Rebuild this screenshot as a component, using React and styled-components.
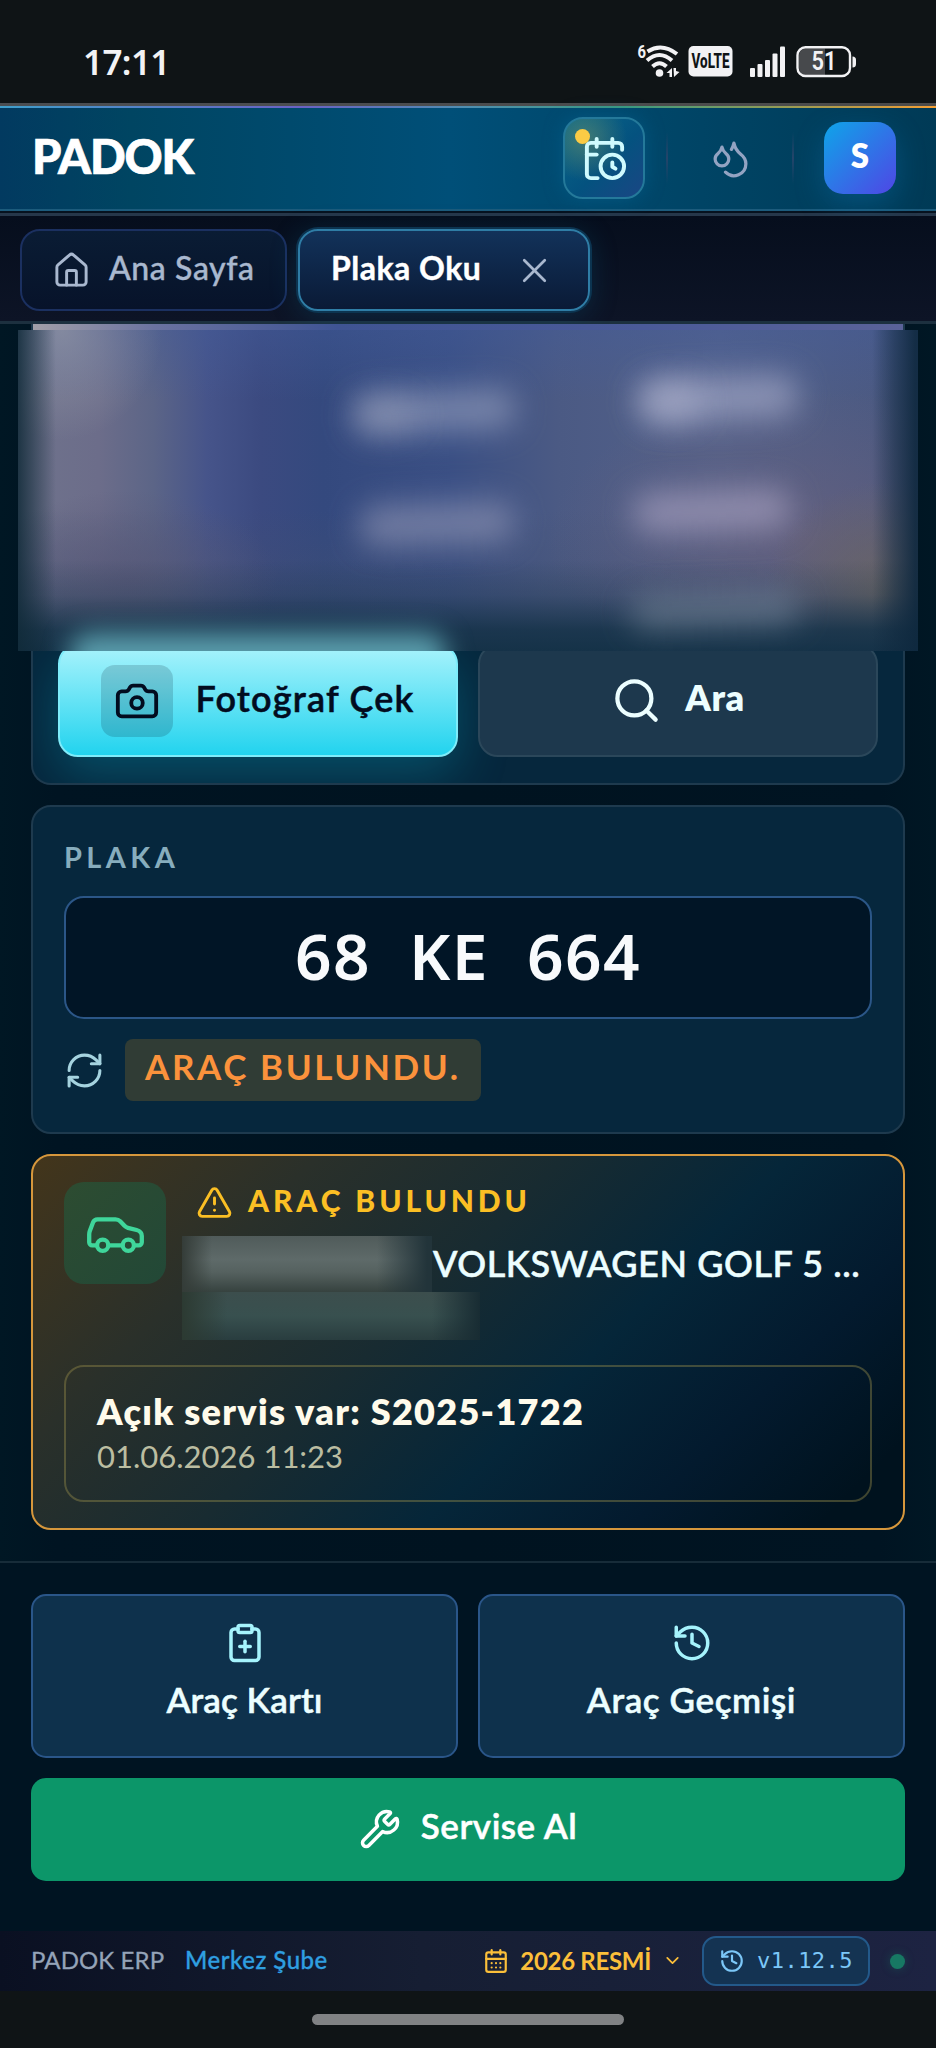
import React from 'react'
import styled, { createGlobalStyle } from 'styled-components'
import {
    CalendarClock,
    CalendarDays,
    Camera,
    ChevronDown,
    ClipboardPlus,
    Droplets,
    History,
    House,
    RefreshCw,
    Search,
    TriangleAlert,
    Wrench,
    X,
} from 'lucide-react'

const smudges = [
    { x: 334, y: 60, w: 164, h: 42, color: 'rgba(150, 160, 190, 0.62)' },
    { x: 338, y: 68, w: 60, h: 36, color: 'rgba(165, 170, 190, 0.3)' },
    { x: 620, y: 46, w: 160, h: 44, color: 'rgba(165, 170, 200, 0.66)' },
    { x: 624, y: 52, w: 60, h: 42, color: 'rgba(185, 188, 212, 0.4)' },
    { x: 341, y: 173, w: 156, h: 42, color: 'rgba(146, 150, 180, 0.62)' },
    { x: 615, y: 160, w: 158, h: 42, color: 'rgba(165, 160, 192, 0.66)' },
    { x: 612, y: 262, w: 170, h: 36, color: 'rgba(115, 132, 150, 0.6)' },
]

const App = () => {
    return (
        <Screen>
            <GlobalStyle />
            <StatusBar>
                <Clock>17:11</Clock>
                <StatusIcons />
            </StatusBar>
            <Header>
                <Logo>PADOK</Logo>
                <HeaderActions>
                    <AgendaButton>
                        <CalendarClock size={47} strokeWidth={2} />
                        <AgendaDot />
                    </AgendaButton>
                    <Divider />
                    <ThemeButton>
                        <Droplets size={41} strokeWidth={1.9} />
                    </ThemeButton>
                    <Divider />
                    <Avatar>S</Avatar>
                </HeaderActions>
            </Header>
            <TabBar>
                <Tab width={267}>
                    <House size={39} strokeWidth={1.8} />
                    <TabLabel indent={18}>Ana Sayfa</TabLabel>
                </Tab>
                <Tab width={292} isActive>
                    <TabLabel isActive>Plaka Oku</TabLabel>
                    <X size={41} strokeWidth={1.6} />
                </Tab>
            </TabBar>
            <Content>
                <ScanCard>
                    <PhotoEdge />
                    <Photo>
                        {smudges.map((s, i) => <Smudge key={i} {...s} />)}
                        <ButtonGlow />
                    </Photo>
                    <ScanActions>
                        <ScanButton isPrimary>
                            <CameraTile><Camera size={46} strokeWidth={2} /></CameraTile>
                            <ScanLabel>Fotoğraf Çek</ScanLabel>
                        </ScanButton>
                        <ScanButton>
                            <Search size={51} strokeWidth={2} />
                            <ScanLabel isStrong>Ara</ScanLabel>
                        </ScanButton>
                    </ScanActions>
                </ScanCard>

                <PlateCard>
                    <PlateTitle>PLAKA</PlateTitle>
                    <PlateInput>68 KE 664</PlateInput>
                    <PlateStatus>
                        <RefreshCw size={41} strokeWidth={1.8} />
                        <StatusBadge>ARAÇ BULUNDU.</StatusBadge>
                    </PlateStatus>
                </PlateCard>

                <FoundCard>
                    <FoundHead>
                        <CarTile><CarIcon /></CarTile>
                        <FoundInfo>
                            <FoundTitle>
                                <TriangleAlert size={37} strokeWidth={1.9} />
                                <span>ARAÇ BULUNDU</span>
                            </FoundTitle>
                            <Vehicle>
                                <HiddenName />
                                <VehicleName>VOLKSWAGEN GOLF 5 ...</VehicleName>
                            </Vehicle>
                            <HiddenOwner />
                        </FoundInfo>
                    </FoundHead>
                    <ServiceBox>
                        <ServiceTitle>Açık servis var: S2025-1722</ServiceTitle>
                        <ServiceDate>01.06.2026 11:23</ServiceDate>
                    </ServiceBox>
                </FoundCard>
            </Content>

            <ActionPanel>
                <ActionRow>
                    <ActionButton>
                        <ClipboardPlus size={42} strokeWidth={2} />
                        <ActionLabel spacing={0.1}>Araç Kartı</ActionLabel>
                    </ActionButton>
                    <ActionButton>
                        <History size={42} strokeWidth={2} />
                        <ActionLabel spacing={0.6}>Araç Geçmişi</ActionLabel>
                    </ActionButton>
                </ActionRow>
                <ServiceButton>
                    <Wrench size={42} strokeWidth={2} />
                    <ActionLabel spacing={0.5}>Servise Al</ActionLabel>
                </ServiceButton>
            </ActionPanel>

            <Footer>
                <Brand>PADOK ERP</Brand>
                <Branch>Merkez Şube</Branch>
                <Period>
                    <CalendarDays size={26} strokeWidth={2} />
                    <span>2026 RESMİ</span>
                    <ChevronDown size={21} strokeWidth={2} />
                </Period>
                <Version>
                    <History size={26} strokeWidth={2} />
                    <span>v1.12.5</span>
                </Version>
                <OnlineDot />
            </Footer>
            <NavBar><NavHandle /></NavBar>
        </Screen>
    )
}

const StatusIcons = () => (
    <svg width="222" height="36" viewBox="-2 0 222 36" fill="none">
        <text x="-0.500" y="14" fill="#f2f2f4" fontSize="18" fontWeight="700" textLength="8.500" lengthAdjust="spacingAndGlyphs" fontFamily="Roboto, sans-serif">6</text>
        <g stroke="#f2f2f4" strokeWidth="4">
            <path d="M9.500 7.500Q24 -1.500 39 10" />
            <path d="M9 16.500Q21.500 5.500 34 16.500" />
            <path d="M14.500 22.500Q21.500 16 28.500 22.500" />
        </g>
        <circle cx="21.500" cy="29" r="3.800" fill="#f2f2f4" />
        <path d="M28.500 29L34 24V33H31.500V29Z" fill="#f2f2f4" />
        <path d="M35.500 24H38V27L41.500 28L36 33Z" fill="#f2f2f4" />
        <rect x="50.500" y="2" width="44" height="30.500" rx="5" fill="#f2f2f4" />
        <text x="53.500" y="24" fill="#101416" fontSize="20.500" fontWeight="800" textLength="38" lengthAdjust="spacingAndGlyphs" fontFamily="Roboto, sans-serif">VoLTE</text>
        <g fill="#f2f2f4">
            <rect x="112" y="24" width="5" height="9" rx="1" />
            <rect x="119.500" y="20" width="5" height="13" rx="1" />
            <rect x="127" y="16" width="5" height="17" rx="1" />
            <rect x="134.500" y="9.500" width="5" height="23.500" rx="1" />
            <rect x="142" y="2.500" width="5" height="30.500" rx="1" />
        </g>
        <path d="M168 4.500H187V31H168a7 7 0 0 1-7-7V11.500a7 7 0 0 1 7-7Z" fill="#47494c" />
        <rect x="159.500" y="3.300" width="52.500" height="28.700" rx="8" stroke="#f2f2f4" strokeWidth="2.400" />
        <path d="M214.500 12.500q3.500 0 3.500 3.500v4q0 3.500-3.500 3.500Z" fill="#f2f2f4" />
        <text x="173.500" y="26.300" fill="#f2f2f4" fontSize="25" fontWeight="600" textLength="25" lengthAdjust="spacingAndGlyphs" fontFamily="Roboto, sans-serif">51</text>
    </svg>
)

const CarIcon = () => (
    <svg width="57" height="37" viewBox="0 0 57 37" fill="none" stroke="#3fd69b" strokeWidth="4.300" strokeLinecap="round" strokeLinejoin="round">
        <path d="M9.500 28.300H5.200a3 3 0 0 1-3-3V17.500q0-1.800.6-3.400L6 5.400Q7.200 2.300 10.500 2.300H28.500q2.800 0 4.700 2l4.300 4.500q1.400 1.500 3.400 2l8.700 2.200q5.200 1.300 5.200 6V25.300a3 3 0 0 1-3 3H47.500" />
        <path d="M22 28.300H35" />
        <circle cx="15.700" cy="28.300" r="5.600" />
        <circle cx="41.300" cy="28.300" r="5.600" />
    </svg>
)

const GlobalStyle = createGlobalStyle`
    * {
        box-sizing: border-box;
    }
    body {
        margin: 0;
        background: #0f1416;
    }
    button {
        font: inherit;
        margin: 0;
        padding: 0;
    }
    svg {
        flex: 0 0 auto;
    }
`
const Screen = styled.div`
    width: 936px;
    height: 2048px;
    overflow: hidden;
    display: flex;
    flex-direction: column;
    background: #001623;
    color: #ecfeff;
    font-family: Lato, 'Noto Sans', sans-serif;
    font-variant-ligatures: none;
    line-height: 1.2;
    white-space: nowrap;
`

const StatusBar = styled.div`
    height: 103px;
    flex: 0 0 auto;
    display: flex;
    justify-content: space-between;
    align-items: flex-start;
    padding: 44px 78px 0 83px;
    background: #0f1416;
`
const Clock = styled.span`
    font-family: 'Noto Sans', sans-serif;
    font-size: 35px;
    line-height: 35px;
    font-weight: 600;
    letter-spacing: -0.6px;
    color: #f2f2f4;
`

const Header = styled.header`
    height: 113px;
    flex: 0 0 auto;
    display: flex;
    align-items: center;
    justify-content: space-between;
    padding: 0 40px 0 32px;
    border-bottom: 3px solid #26374a;
    background:
        linear-gradient(90deg, #4b4e52, #4b4b4b) 0 0 / 100% 3px no-repeat,
        linear-gradient(90deg, #3f9fcb, #6a62c4 32%, #4f8fb0 50%, #3c9c80 67%, #8c9c58 82%, #f59f33) 0 3px / 100% 2px no-repeat,
        linear-gradient(#06121f, #06121f) 0 100% / 100% 2px no-repeat,
        linear-gradient(#1c5b7c, #1c5b7c) 0 106px / 100% 2px no-repeat,
        linear-gradient(90deg, #023a60, #004562 14%, #004f78 48%, #004465 75%, #003a56);
`
const Logo = styled.div`
    padding-bottom: 3px;
    font-size: 47px;
    font-weight: 900;
    letter-spacing: -1.1px;
    color: #fff;
    -webkit-text-stroke: 0.7px #fff;
`
const HeaderActions = styled.div`
    display: flex;
    align-items: center;
`
const AgendaButton = styled.button`
    position: relative;
    display: flex;
    align-items: center;
    justify-content: center;
    width: 82px;
    height: 82px;
    border: 2px solid #24799a;
    border-radius: 20px;
    color: #cffafe;
    background:
        radial-gradient(circle at 20px 20px, rgba(150, 165, 95, 0.4), rgba(60, 130, 120, 0) 42px),
        linear-gradient(135deg, #086688, #04527f 55%, #1a4684);
    box-shadow: 0 0 20px rgba(8, 110, 160, 0.4);
`
const AgendaDot = styled.span`
    position: absolute;
    left: 10px;
    top: 10px;
    width: 15px;
    height: 15px;
    border-radius: 50%;
    background: #fbcb45;
`
const Divider = styled.span`
    width: 2px;
    height: 52px;
    margin: 0 21px;
    background: linear-gradient(rgba(50, 65, 95, 0), #24456a, rgba(50, 65, 95, 0));
`
const ThemeButton = styled.button`
    display: flex;
    align-items: center;
    justify-content: center;
    width: 82px;
    height: 82px;
    border: 0;
    background: none;
    color: #93a3c2;
`
const Avatar = styled.div`
    display: flex;
    align-items: center;
    justify-content: center;
    width: 72px;
    height: 72px;
    margin-left: 9px;
    padding-bottom: 5px;
    border-radius: 19px;
    background: linear-gradient(135deg, #0ea5e9, #4f46e5);
    box-shadow: 0 10px 30px rgba(14, 130, 200, 0.3);
    color: #fff;
    font-size: 33px;
    font-weight: 800;
`

const TabBar = styled.nav`
    height: 108px;
    flex: 0 0 auto;
    display: flex;
    gap: 11px;
    padding: 13px 20px 0;
    border-bottom: 3px solid #1c303f;
    background: linear-gradient(#060e1d, #0d1426);
`
const Tab = styled.div`
    display: flex;
    align-items: center;
    justify-content: ${({isActive}) => isActive ? 'space-between' : 'flex-start'};
    width: ${({width}) => width}px;
    height: 82px;
    padding: ${({isActive}) => isActive ? '0 33px 0 31px' : '0 30px'};
    border: 2px solid ${({isActive}) => isActive ? '#2f7da6' : '#1b3060'};
    border-radius: 20px;
    color: #a9b8cf;
    background: ${({isActive}) => isActive ? 'linear-gradient(#12325a, #0a1a36)' : 'linear-gradient(#0a1c34, #07132a)'};
    box-shadow: ${({isActive}) => isActive ? '0 0 0 2px #0c3450, 0 4px 28px rgba(14, 100, 140, 0.3)' : 'none'};
`
const TabLabel = styled.span`
    margin-left: ${({indent}) => indent || 0}px;
    padding-bottom: 3px;
    font-size: 32px;
    font-weight: ${({isActive}) => isActive ? 700 : 500};
    color: ${({isActive}) => isActive ? '#fff' : '#a9b8cf'};
    letter-spacing: ${({isActive}) => isActive ? 0.5 : 0.6}px;
    -webkit-text-stroke: 0.4px;
`

const Content = styled.main`
    height: 1237px;
    flex: 0 0 auto;
    display: flex;
    flex-direction: column;
    gap: 20px;
    padding: 0 31px;
    background: linear-gradient(90deg, #001724, #001422 6%, #001320 50%, #001422 94%, #001724);
`
const ScanCard = styled.section`
    height: 461px;
    border: 2px solid #1e3a4e;
    border-top: 0;
    border-radius: 0 0 20px 20px;
    background: #06273d;
`
const PhotoEdge = styled.div`
    height: 6px;
    background: linear-gradient(90deg, #a19fa8, #6a72a0 14%, #3f5493 35%, #4a5a98 70%, #5a6298);
`
const Photo = styled.div`
    position: relative;
    z-index: 1;
    height: 321px;
    margin: 0 -15px;
    overflow: hidden;
    background:
        linear-gradient(90deg, rgba(16, 42, 56, 0.85), rgba(16, 42, 56, 0.55) 14px, rgba(16, 42, 56, 0) 38px, rgba(14, 42, 58, 0) 854px, rgba(14, 40, 62, 0.5) 876px, rgba(14, 40, 62, 0.9) 897px),
        linear-gradient(rgba(21, 50, 72, 0) 230px, rgba(21, 50, 72, 0.25) 265px, rgba(21, 50, 72, 0.88) 300px, #153248 321px),
        radial-gradient(ellipse 120px 110px at 866px 262px, rgba(108, 102, 98, 0.85), rgba(108, 102, 98, 0)),
        radial-gradient(ellipse 260px 150px at 790px 210px, rgba(104, 96, 124, 0.75), rgba(104, 96, 124, 0)),
        radial-gradient(ellipse 100px 110px at 44px 0, rgba(144, 148, 164, 0.75), rgba(144, 148, 164, 0)),
        radial-gradient(ellipse 150px 90px at 110px 250px, rgba(88, 88, 120, 0.8), rgba(88, 88, 120, 0)),
        linear-gradient(rgba(66, 92, 156, 0.4), rgba(66, 92, 156, 0) 70px, rgba(66, 80, 112, 0) 180px, rgba(66, 80, 112, 0.4) 260px),
        linear-gradient(90deg, #6f738c, #6c6d8a 9%, #5c6587 15%, #46548a 21%, #3b4a80 27%, #34497e 34%, #3a4f84 48%, #4b5a84 60%, #53618a 78%, #4a5880);
`
const Smudge = styled.div`
    position: absolute;
    left: ${({x}) => x}px;
    top: ${({y}) => y}px;
    width: ${({w}) => w}px;
    height: ${({h}) => h}px;
    border-radius: 20px;
    background: ${({color}) => color};
    filter: blur(15px);
    transform: rotate(-2deg);
`
const ButtonGlow = styled.div`
    position: absolute;
    left: 52px;
    top: 303px;
    width: 376px;
    height: 60px;
    border-radius: 20px;
    background: #5a9dac;
    filter: blur(13px);
`
const ScanActions = styled.div`
    display: grid;
    grid-template-columns: 1fr 1fr;
    gap: 20px;
    margin-top: -7px;
    padding: 0 25px 0;
    height: 139px;
    overflow: hidden;
    border-radius: 0 0 18px 18px;
`
const ScanButton = styled.button`
    display: flex;
    align-items: center;
    justify-content: center;
    gap: ${({isPrimary}) => isPrimary ? 22 : 23}px;
    height: 113px;
    border: 2px solid ${({isPrimary}) => isPrimary ? '#7eecfa' : '#2b475a'};
    border-radius: 20px;
    color: ${({isPrimary}) => isPrimary ? '#020c1f' : '#ecfeff'};
    background: ${({isPrimary}) => isPrimary ? 'linear-gradient(#a8f3fc, #22d3ee)' : '#1d384d'};
    box-shadow: ${({isPrimary}) => isPrimary ? '0 18px 50px rgba(6, 182, 212, 0.28)' : 'none'};
`
const CameraTile = styled.span`
    display: flex;
    align-items: center;
    justify-content: center;
    width: 72px;
    height: 72px;
    border-radius: 14px;
    background: rgba(2, 12, 31, 0.16);
`
const ScanLabel = styled.span`
    padding-bottom: ${({isStrong}) => isStrong ? 5 : 3}px;
    font-size: 36px;
    font-weight: ${({isStrong}) => isStrong ? 800 : 600};
    letter-spacing: ${({isStrong}) => isStrong ? 0.6 : 1.2}px;
    -webkit-text-stroke: ${({isStrong}) => isStrong ? 0 : 0.5}px;
`

const PlateCard = styled.section`
    height: 329px;
    padding: 31px;
    border: 2px solid #1e3a4e;
    border-radius: 20px;
    background: #06273d;
`
const PlateTitle = styled.div`
    height: 38px;
    line-height: 38px;
    font-size: 29px;
    font-weight: 700;
    letter-spacing: 4.4px;
    color: #87adbd;
`
const PlateInput = styled.div`
    height: 123px;
    margin-top: 20px;
    border: 2px solid #2b5687;
    border-radius: 20px;
    background: #011526;
    color: #f8fafc;
    font-family: 'Noto Sans', sans-serif;
    font-size: 64px;
    font-weight: 600;
    line-height: 116px;
    letter-spacing: 1.4px;
    word-spacing: 20px;
    text-align: center;
`
const PlateStatus = styled.div`
    display: flex;
    align-items: center;
    gap: 20px;
    margin-top: 20px;
    color: #a5d3df;
`
const StatusBadge = styled.span`
    width: 356px;
    height: 62px;
    padding-left: 20px;
    border-radius: 8px;
    background: #303c35;
    color: #fb923c;
    font-size: 35px;
    line-height: 55px;
    font-weight: 700;
    letter-spacing: 2.6px;
`

const FoundCard = styled.section`
    height: 376px;
    padding: 26px 31px;
    border: 2px solid #d6973c;
    border-radius: 20px;
    background: linear-gradient(135deg, #43351b, #2a302a 23%, #182b31 43%, #052639 61%, #031a2e 78%, #00121e 93%);
`
const FoundHead = styled.div`
    display: flex;
    height: 183px;
`
const CarTile = styled.div`
    display: flex;
    align-items: center;
    justify-content: center;
    width: 102px;
    height: 102px;
    padding-top: 5px;
    border-radius: 20px;
    background: linear-gradient(135deg, #2d4c31, #224837);
`
const FoundInfo = styled.div`
    padding-left: 16px;
`
const FoundTitle = styled.div`
    display: flex;
    align-items: center;
    gap: 15px;
    height: 40px;
    margin-bottom: 14px;
    padding-left: 14px;
    color: #fbbf24;
    font-size: 30px;
    font-weight: 900;
    letter-spacing: 3.9px;

    span {
        padding-bottom: 4px;
    }
`
const Vehicle = styled.div`
    display: flex;
    align-items: center;
    height: 56px;
`
const HiddenName = styled.div`
    width: 250px;
    height: 56px;
    background:
        linear-gradient(90deg, #343c38, rgba(60, 70, 68, 0) 30px, rgba(60, 70, 68, 0) 195px, #22343a 245px),
        linear-gradient(#505b5a, #5e6a69 42%, #55615f 65%, #36423f);
`
const VehicleName = styled.span`
    padding: 0 0 1px 1px;
    font-size: 36px;
    font-weight: 500;
    letter-spacing: 0.55px;
    -webkit-text-stroke: 0.6px;
`
const HiddenOwner = styled.div`
    width: 298px;
    height: 48px;
    background:
        linear-gradient(90deg, #2c3a32, rgba(42, 63, 62, 0) 45px, rgba(42, 63, 62, 0) 250px, #182c33 298px),
        linear-gradient(#3c4e4d, #38504f 50%, #293d3f);
`
const ServiceBox = styled.div`
    height: 137px;
    padding: 24px 31px;
    border: 2px solid rgba(150, 140, 75, 0.42);
    border-radius: 20px;
`
const ServiceTitle = styled.div`
    line-height: 40px;
    font-size: 36px;
    font-weight: 800;
    letter-spacing: 1.3px;
    color: #fffbeb;
`
const ServiceDate = styled.div`
    margin-top: 5px;
    line-height: 40px;
    font-size: 31px;
    font-weight: 400;
    color: #bbbda1;
`

const ActionPanel = styled.section`
    height: 370px;
    flex: 0 0 auto;
    padding: 31px 31px 0;
    border-top: 2px solid #172c39;
    background: #001422;
`
const ActionRow = styled.div`
    display: grid;
    grid-template-columns: 1fr 1fr;
    gap: 20px;
`
const ActionLabel = styled.span`
    height: 62px;
    line-height: 60px;
    color: #ecfeff;
    font-size: 35px;
    font-weight: 600;
    letter-spacing: ${({spacing}) => spacing || 0}px;
    -webkit-text-stroke: 0.5px;
`
const ActionButton = styled.button`
    display: flex;
    flex-direction: column;
    align-items: center;
    gap: 5px;
    height: 164px;
    padding-top: 26px;
    border: 2px solid #2a5689;
    border-radius: 15px;
    background: #0e314c;
    color: #a5f3fc;
`
const ServiceButton = styled.button`
    display: flex;
    align-items: center;
    justify-content: center;
    gap: 20px;
    width: 100%;
    height: 103px;
    margin-top: 20px;
    padding-bottom: 2px;
    border: 0;
    border-radius: 15px;
    background: #0c9669;
    color: #fff;

    ${ActionLabel} {
        height: 67px;
        color: #fff;
    }
`

const Footer = styled.footer`
    height: 60px;
    flex: 0 0 auto;
    display: flex;
    align-items: center;
    padding: 0 31px;
    background: linear-gradient(90deg, #0a1022, #161e33 45%, #182038 65%, #1d2342);
    font-size: 24px;
`
const Brand = styled.span`
    width: 154px;
    padding-bottom: 1px;
    color: #94a3b8;
    letter-spacing: 0.1px;
    -webkit-text-stroke: 0.3px;
`
const Branch = styled.span`
    flex: 1 1 0%;
    padding-bottom: 1px;
    color: #2f9fe0;
    font-weight: 500;
    letter-spacing: 0.5px;
    -webkit-text-stroke: 0.3px;
`
const Period = styled.div`
    display: flex;
    align-items: center;
    gap: 11px;
    margin-right: 19px;
    color: #fbbf3a;
    font-weight: 700;
    letter-spacing: -0.3px;
`
const Version = styled.div`
    display: flex;
    align-items: center;
    justify-content: center;
    gap: 12px;
    width: 168px;
    height: 50px;
    border: 2px solid #23598a;
    border-radius: 14px;
    background: #143352;
    color: #7cc7f8;
    font-family: 'DejaVu Sans Mono', monospace;
    font-size: 22px;
    letter-spacing: 0.5px;
`
const OnlineDot = styled.span`
    width: 15px;
    height: 15px;
    margin-left: 20px;
    border-radius: 50%;
    background: #177863;
    box-shadow: 0 0 10px rgba(23, 120, 99, 0.4);
`
const NavBar = styled.div`
    height: 57px;
    flex: 0 0 auto;
    display: flex;
    justify-content: center;
    padding-top: 23px;
    background: #0f1416;
`
const NavHandle = styled.div`
    width: 312px;
    height: 11px;
    border-radius: 6px;
    background: #808284;
`

export default App
